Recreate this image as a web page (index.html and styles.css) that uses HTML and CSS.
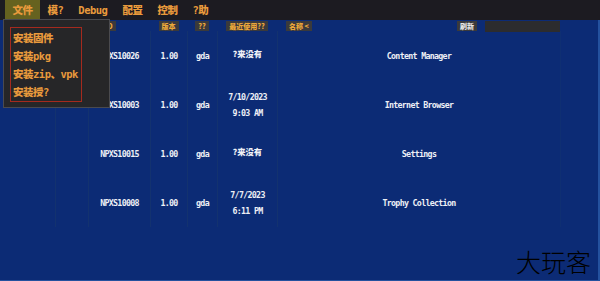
FILE: index.html
```html
<!DOCTYPE html>
<html>
<head>
<meta charset="utf-8">
<link rel="stylesheet" href="styles.css">
</head>
<body>
<div class="app">
  <nav class="menubar">
    <span class="menu-item active">文件</span>
    <span class="menu-item">模?</span>
    <span class="menu-item">Debug</span>
    <span class="menu-item">配置</span>
    <span class="menu-item">控制</span>
    <span class="menu-item">?助</span>
  </nav>
  <main class="content">
    <div class="grid head">
      <div class="hcell"></div>
      <div class="hcell"></div>
      <div class="hcell id"><span class="label">ID</span></div>
      <div class="hcell center"><span class="label">版本</span></div>
      <div class="hcell center"><span class="label">??</span></div>
      <div class="hcell center"><span class="label">最近使用??</span></div>
      <div class="hcell name">
        <span class="label">名称 &lt;</span>
        <div class="tools">
          <span class="label refresh">刷新</span>
          <span class="search"></span>
        </div>
      </div>
      <div class="hcell"></div>
    </div>
    <div class="grid row">
      <div class="cell"></div><div class="cell"></div>
      <div class="cell">NPXS10026</div><div class="cell">1.00</div><div class="cell">gda</div>
      <div class="cell date"><span class="cjk">?来没有</span></div>
      <div class="cell">Content Manager</div><div class="cell"></div>
    </div>
    <div class="grid row">
      <div class="cell"></div><div class="cell"></div>
      <div class="cell">NPXS10003</div><div class="cell">1.00</div><div class="cell">gda</div>
      <div class="cell date"><span>7/10/2023</span><span>9:03 AM</span></div>
      <div class="cell">Internet Browser</div><div class="cell"></div>
    </div>
    <div class="grid row">
      <div class="cell"></div><div class="cell"></div>
      <div class="cell">NPXS10015</div><div class="cell">1.00</div><div class="cell">gda</div>
      <div class="cell date"><span class="cjk">?来没有</span></div>
      <div class="cell">Settings</div><div class="cell"></div>
    </div>
    <div class="grid row">
      <div class="cell"></div><div class="cell"></div>
      <div class="cell">NPXS10008</div><div class="cell">1.00</div><div class="cell">gda</div>
      <div class="cell date"><span>7/7/2023</span><span>6:11 PM</span></div>
      <div class="cell">Trophy Collection</div><div class="cell"></div>
    </div>
  </main>
  <div class="dropdown">
    <ul class="dropdown-list">
      <li>安装固件</li>
      <li>安装pkg</li>
      <li>安装zip、vpk</li>
      <li>安装授?</li>
    </ul>
  </div>
  <div class="watermark">大玩客</div>
</div>
</body>
</html>
```
FILE: styles.css
```css
* { box-sizing: border-box; }
html, body { margin: 0; padding: 0; }
body {
  width: 600px;
  height: 281px;
  overflow: hidden;
  background: #0c2b75;
  font-family: "DejaVu Sans Mono", "Noto Sans CJK SC", monospace;
  font-weight: bold;
}
.app {
  position: relative;
  width: 600px;
  height: 281px;
  display: flex;
  flex-direction: column;
}
.menubar {
  height: 20px;
  background: #1c1b21;
  display: flex;
  align-items: stretch;
  padding-left: 5px;
}
.menu-item {
  color: #e99a3c;
  font-size: 10.5px;
  font-weight: 900;
  letter-spacing: -0.5px;
  padding: 0 7.5px;
  display: flex;
  align-items: center;
  height: 19px;
}
.menu-item.active { background: #66621f; }
.content {
  flex: 1;
  border-right: 2px solid #24519e;
  border-bottom: 1px solid #24519e;
}
.grid {
  display: grid;
  grid-template-columns: 55px 33px 62px 37px 30px 60px 283px 38px;
}
.head { height: 11px; padding-top: 1px; }
.hcell {
  display: flex;
  align-items: stretch;
  font-size: 7px;
}
.hcell.center { justify-content: center; }
.hcell.id { padding-left: 14px; }
.label {
  background: #3a3a3c;
  color: #eaa73a;
  padding: 0 3px;
  display: flex;
  align-items: center;
  height: 10px;
  font-family: "Noto Sans CJK SC", "DejaVu Sans Mono", sans-serif;
  font-weight: 900;
  font-size: 7px;
}
.hcell.name {
  padding-left: 9px;
  justify-content: space-between;
}
.tools { display: flex; gap: 8px; }
.label.refresh { color: #e6e6e6; }
.search {
  width: 75px;
  height: 11px;
  background: #2c2c2e;
}
.row { height: 49px; }
.cell {
  display: flex;
  flex-direction: column;
  align-items: center;
  justify-content: center;
  color: #eef0f6;
  font-size: 8.3px;
  letter-spacing: -0.7px;
  border-left: 1px solid #13326f;
}
.cell:first-child { border-left: none; }
.cell:last-child { border-left-color: #0f2f72; }
.date { gap: 6px; }
.date .cjk {
  font-family: "Noto Sans CJK SC", sans-serif;
  font-weight: 900;
  letter-spacing: 0;
  margin-top: -6px;
}
.dropdown {
  position: absolute;
  left: 3px;
  top: 19px;
  width: 107px;
  height: 89px;
  background: #262628;
  border: 1px solid #4a4a4e;
  padding: 7px 0 0 6px;
}
.dropdown-list {
  list-style: none;
  margin: 0;
  padding: 0 0 0 2px;
  width: 72px;
  height: 75px;
  border: 1px solid #a52a1e;
  display: flex;
  flex-direction: column;
  justify-content: space-around;
}
.dropdown-list li {
  color: #e99a3c;
  font-size: 10.5px;
  font-weight: 900;
  letter-spacing: -0.5px;
  white-space: nowrap;
}
.watermark {
  position: absolute;
  right: 9px;
  bottom: 2px;
  font-family: "Noto Sans CJK SC", sans-serif;
  font-weight: 300;
  font-size: 25px;
  color: #000;
}
```
